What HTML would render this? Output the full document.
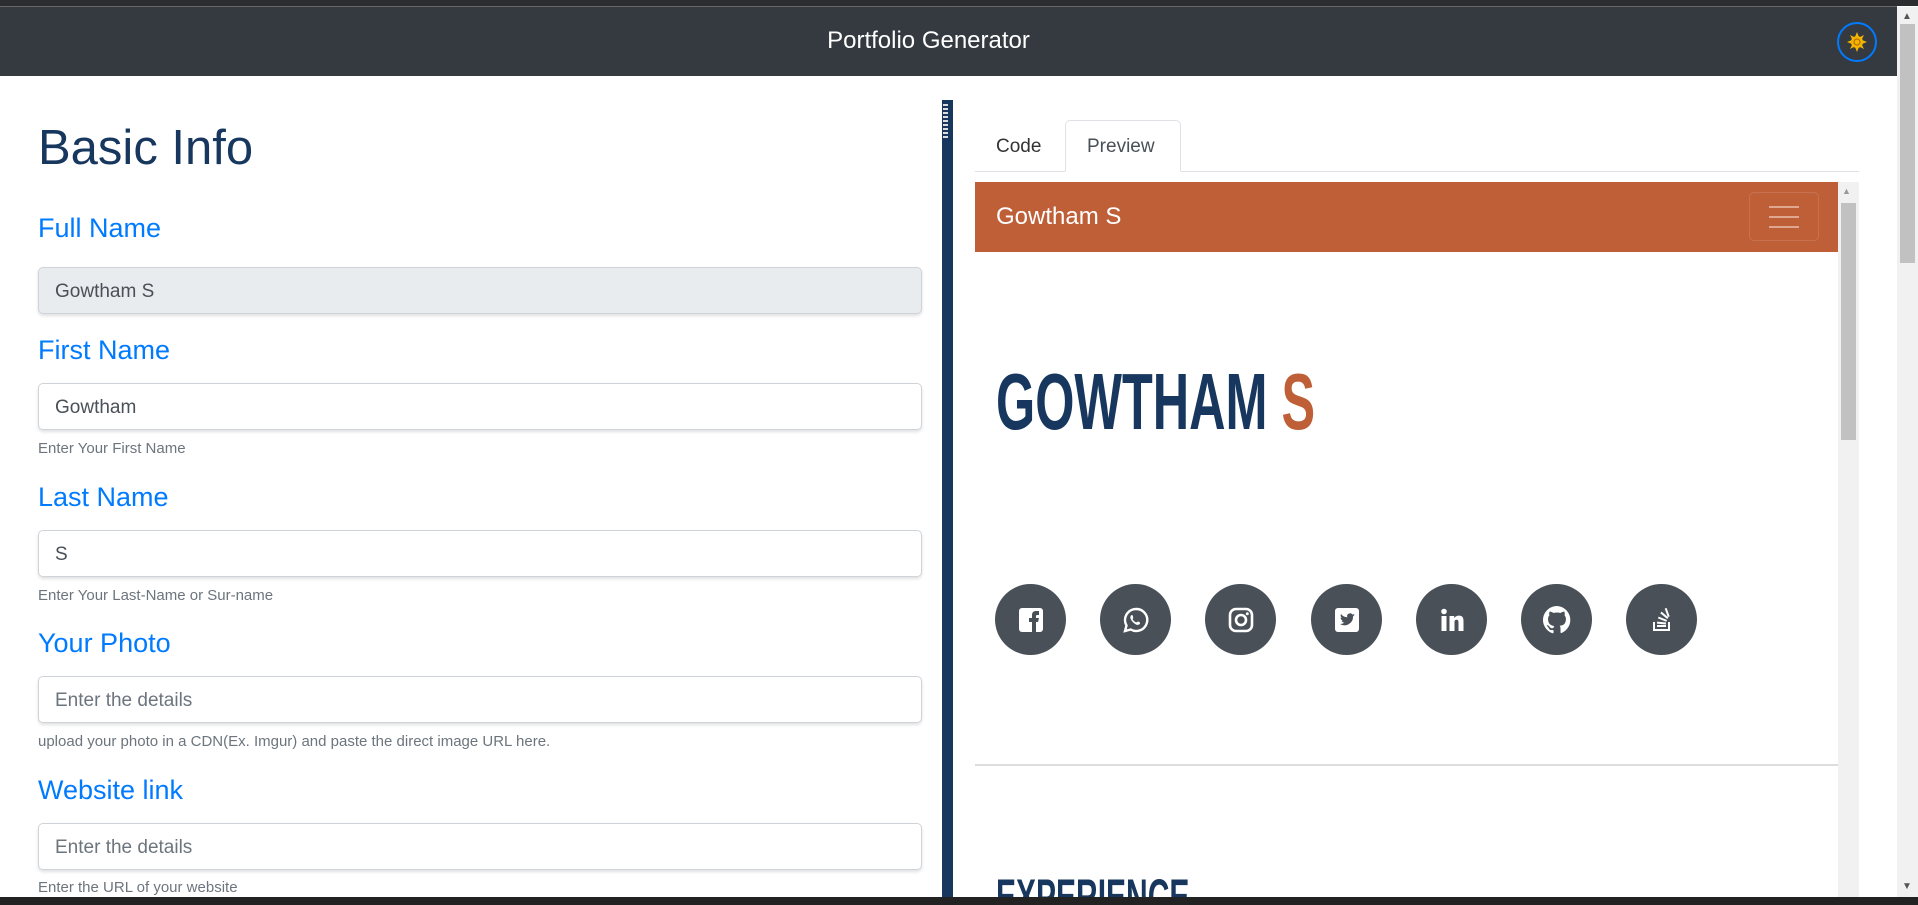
<!DOCTYPE html>
<html><head><meta charset="utf-8"><style>
*{box-sizing:border-box;margin:0;padding:0}
body{width:1918px;height:905px;overflow:hidden;background:#fff;font-family:"Liberation Sans",sans-serif;position:relative}
.a{position:absolute}
.lbl{position:absolute;left:38px;color:#007bff;font-size:27px}
.inp{position:absolute;left:38px;width:884px;height:47px;border:1px solid #ced4da;border-radius:5px;box-shadow:0 2px 3px rgba(0,0,0,.12);font-size:19px;color:#495057;padding:13px 0 0 16px}
.help{position:absolute;left:38px;font-size:15px;color:#6c757d}
.ph{color:#6c757d}
.c{position:absolute;top:584px;width:71px;height:71px;border-radius:50%;background:#495057;display:flex;align-items:center;justify-content:center}
</style></head><body>
<div class="a" style="left:0;top:0;width:1918px;height:6px;background:#2b2d31"></div>
<div class="a" style="left:0;top:6px;width:1897px;height:1px;background:#666"></div>
<div class="a" style="left:0;top:7px;width:1897px;height:69px;background:#343a40"></div>
<div class="a" style="left:0;top:27px;width:1857px;text-align:center;color:#fff;font-size:24px">Portfolio Generator</div>
<div class="a" style="left:1837px;top:22px;width:40px;height:40px;border:2px solid #007bff;border-radius:50%;display:flex;align-items:center;justify-content:center">
<svg width="22" height="22" viewBox="0 0 22 22"><g fill="#f5b400"><circle cx="11" cy="11" r="6"/><polygon points="11,1 13,6 9,6"/><polygon points="11,21 13,16 9,16"/><polygon points="1,11 6,9 6,13"/><polygon points="21,11 16,9 16,13"/><polygon points="4,4 8,6 6,8"/><polygon points="18,4 16,8 14,6"/><polygon points="4,18 6,14 8,16"/><polygon points="18,18 14,16 16,14"/></g><circle cx="11" cy="11" r="3" fill="none" stroke="#b07000" stroke-width="1.2"/></svg></div>
<div class="a" style="left:1897px;top:7px;width:21px;height:890px;background:#f1f1f1"></div>
<div class="a" style="left:1900px;top:24px;width:15px;height:239px;background:#c1c1c1"></div>
<div class="a" style="left:1902px;top:881px;font-size:10px;color:#555">▼</div>
<div class="a" style="left:1902px;top:11px;font-size:10px;color:#555">▲</div>

<div class="a" style="left:38px;top:120px;font-size:49px;color:#17375e">Basic Info</div>
<div class="lbl" style="top:213px">Full Name</div>
<div class="inp" style="top:267px;background:#e9ecef">Gowtham S</div>
<div class="lbl" style="top:335px">First Name</div>
<div class="inp" style="top:383px">Gowtham</div>
<div class="help" style="top:440px">Enter Your First Name</div>
<div class="lbl" style="top:482px">Last Name</div>
<div class="inp" style="top:530px">S</div>
<div class="help" style="top:587px">Enter Your Last-Name or Sur-name</div>
<div class="lbl" style="top:628px">Your Photo</div>
<div class="inp ph" style="top:676px">Enter the details</div>
<div class="help" style="top:733px">upload your photo in a CDN(Ex. Imgur) and paste the direct image URL here.</div>
<div class="lbl" style="top:775px">Website link</div>
<div class="inp ph" style="top:823px">Enter the details</div>
<div class="help" style="top:879px">Enter the URL of your website</div>

<div class="a" style="left:942px;top:100px;width:11px;height:797px;background:#17375e"></div>
<div class="a" style="left:943px;top:102px;width:5px;height:36px;background:repeating-linear-gradient(#17375e 0 2px,#ddd 2px 4px)"></div>

<div class="a" style="left:975px;top:171px;width:884px;height:1px;background:#dee2e6"></div>
<div class="a" style="left:996px;top:136px;font-size:19px;color:#333">Code</div>
<div class="a" style="left:1065px;top:120px;width:116px;height:52px;border:1px solid #dee2e6;border-bottom:1px solid #fff;border-radius:5px 5px 0 0;background:#fff;font-size:19px;color:#495057;padding:15px 0 0 21px">Preview</div>

<div class="a" style="left:975px;top:182px;width:863px;height:715px;background:#fff;overflow:hidden">
<div class="a" style="left:0;top:0;width:863px;height:70px;background:#bf5f38"></div>
<div class="a" style="left:21px;top:21px;color:#fff;font-size:24px">Gowtham S</div>
<div class="a" style="left:774px;top:10px;width:70px;height:49px;border:1px solid rgba(255,255,255,.12);border-radius:5px"></div>
<div class="a" style="left:794px;top:24px;width:30px;height:2px;background:#e8b8a6;box-shadow:0 10px 0 #e8b8a6,0 20px 0 #e8b8a6;opacity:.8"></div>
<div class="a" style="left:21px;top:170px;font-family:'Liberation Sans Narrow','Liberation Sans',sans-serif;font-weight:bold;font-size:80px;line-height:100px;color:#17375e;transform:scaleX(.63);transform-origin:left;white-space:nowrap">GOWTHAM <span style="color:#bf5f38">S</span></div>
<div class="a" style="left:0;top:582px;width:863px;height:2px;background:#ddd"></div>
<div class="a" style="left:21px;top:686px;font-family:'Liberation Sans Narrow','Liberation Sans',sans-serif;font-weight:bold;font-size:50px;color:#17375e;transform:scaleX(.6);transform-origin:left">EXPERIENCE</div>
</div>
<div class="c" style="left:995px"><svg width="26" height="26" viewBox="0 0 26 26"><rect x="1" y="1" width="24" height="24" rx="3" fill="#fff"/><path d="M14 25V15h-3v-4h3V8c0-3 2-4 4-4h3v4h-2c-1 0-1 1-1 1v2h3l-1 4h-2v10z" fill="#495057"/></svg></div>
<div class="c" style="left:1100px"><svg width="28" height="28" viewBox="0 0 28 28"><path d="M14 3a11 11 0 0 0-9.5 16.5L3 25l5.7-1.5A11 11 0 1 0 14 3z" fill="none" stroke="#fff" stroke-width="2.4"/><path d="M10 9c1 0 1.5 3 1 3.5s-.5 1 .5 2 2 2 3 1.8 1-.8 1.5-.8 2.5 1 2 2-2 2-4 1-5-4-5.5-6S9 9 10 9z" fill="#fff"/></svg></div>
<div class="c" style="left:1205px"><svg width="26" height="26" viewBox="0 0 26 26"><rect x="2" y="2" width="22" height="22" rx="6" fill="none" stroke="#fff" stroke-width="2.6"/><circle cx="13" cy="13" r="5" fill="none" stroke="#fff" stroke-width="2.6"/><circle cx="19.3" cy="6.7" r="1.5" fill="#fff"/></svg></div>
<div class="c" style="left:1311px"><svg width="26" height="26" viewBox="0 0 26 26"><rect x="1" y="1" width="24" height="24" rx="3" fill="#fff"/><path d="M21 8c-.6.3-1.2.4-1.8.5.7-.4 1.1-1 1.4-1.7-.6.4-1.3.6-2 .8a3 3 0 0 0-5.3 2.7A8.6 8.6 0 0 1 7 7a3 3 0 0 0 1 4c-.5 0-1-.2-1.4-.4 0 1.5 1 2.7 2.4 3-.4.1-1 .2-1.4 0 .4 1.2 1.5 2 2.8 2A6 6 0 0 1 6 17a8.5 8.5 0 0 0 13-7.6c.7-.4 1.4-1 2-1.4z" fill="#495057"/></svg></div>
<div class="c" style="left:1416px"><svg width="26" height="26" viewBox="0 0 26 26" fill="#fff"><circle cx="5" cy="4.5" r="2.8"/><rect x="2.5" y="9" width="5" height="15"/><path d="M10.5 9h4.7v2.2c.8-1.4 2.4-2.6 4.8-2.6 4 0 4.5 2.7 4.5 6V24h-5v-8c0-2-.2-3.3-2-3.3s-2 1.3-2 3.2V24h-5z"/></svg></div>
<div class="c" style="left:1521px"><svg width="28" height="28" viewBox="0 0 16 16"><path fill="#fff" d="M8 0a8 8 0 0 0-2.5 15.6c.4 0 .5-.2.5-.4v-1.5c-2.2.5-2.7-1-2.7-1-.4-.9-.9-1.2-.9-1.2-.7-.5.1-.5.1-.5.8.1 1.2.8 1.2.8.7 1.3 1.900.9 2.3.7.1-.5.3-.9.5-1.100-1.8-.2-3.6-.9-3.6-4 0-.9.3-1.6.8-2.1-.1-.2-.4-1 .1-2.1 0 0 .7-.2 2.2.8a7.6 7.6 0 0 1 4 0c1.5-1 2.2-.8 2.2-.8.4 1.1.2 1.9.1 2.1.5.6.8 1.3.8 2.1 0 3.1-1.9 3.7-3.6 3.9.3.3.5.8.5 1.5v2.2c0 .2.1.5.6.4A8 8 0 0 0 8 0z"/></svg></div>
<div class="c" style="left:1626px"><svg width="26" height="26" viewBox="0 0 26 26" fill="#fff"><path d="M4 15v9h17v-9h-2v7H6v-7z"/><rect x="8" y="18" width="9" height="2"/><rect x="8" y="15" width="9" height="2" transform="rotate(6 12 16)"/><rect x="9" y="11" width="9" height="2" transform="rotate(22 13 12)"/><rect x="11" y="7" width="9" height="2" transform="rotate(40 15 8)"/><rect x="14" y="4" width="9" height="2" transform="rotate(70 18 5)"/></svg></div>

<div class="a" style="left:1838px;top:182px;width:21px;height:715px;background:#f1f1f1"></div>
<div class="a" style="left:1841px;top:203px;width:15px;height:237px;background:#c1c1c1"></div>
<div class="a" style="left:1842px;top:186px;font-size:9px;color:#999">▲</div>
<div class="a" style="left:0;top:897px;width:1918px;height:8px;background:#222"></div>
</body></html>
